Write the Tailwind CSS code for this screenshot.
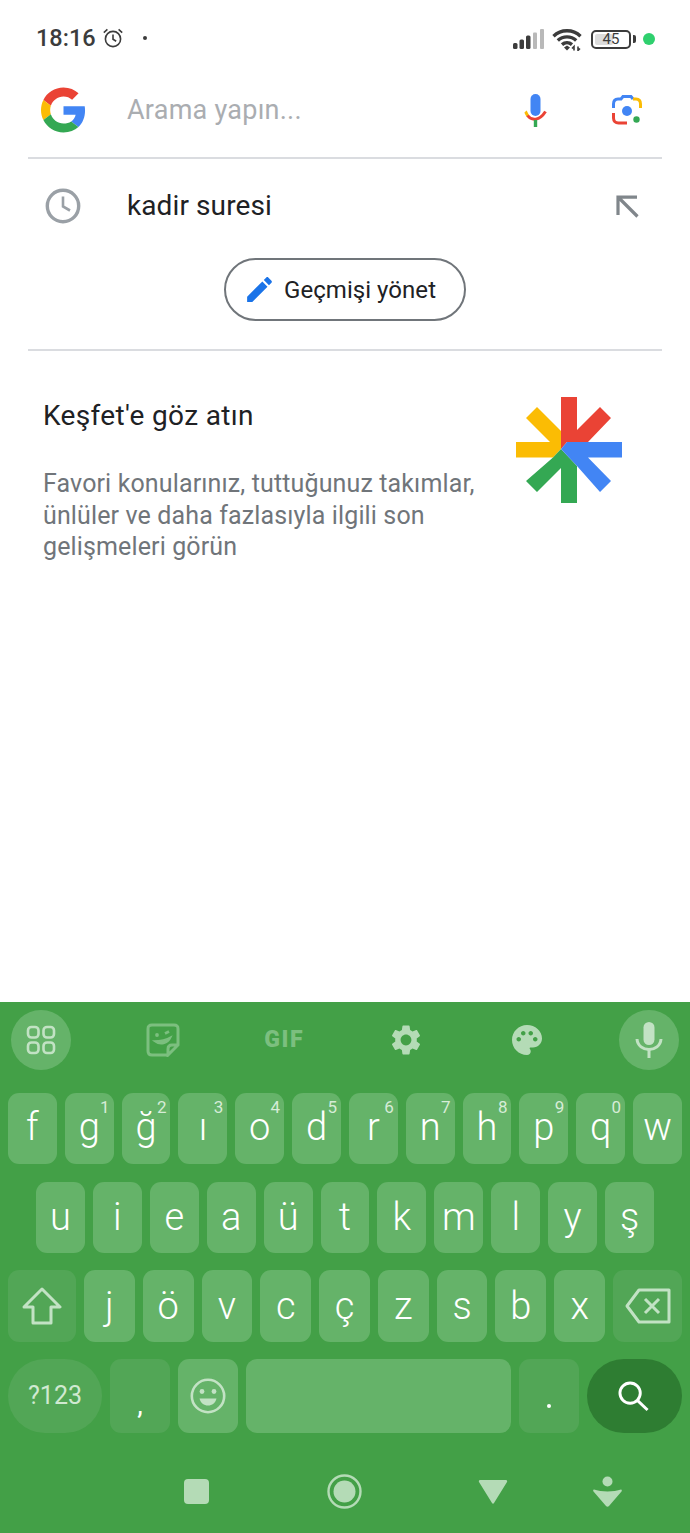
<!DOCTYPE html>
<html lang="tr">
<head>
  <meta charset="UTF-8" />
  <meta name="viewport" content="width=device-width, initial-scale=1.0"/>
  <title>Arama</title>
  <script src="https://cdn.jsdelivr.net/npm/@tailwindcss/browser@4"></script>
</head>
<body class="bg-white font-['Roboto',sans-serif] text-[#202124]">
<div class="w-[690px] h-[1533px] flex flex-col overflow-hidden">

  <!-- status bar -->
  <div class="h-[72px] pt-[6px] pl-[36px] pr-[35px] flex items-center text-[#3c3c3c]">
    <span class="text-[23.5px] font-medium leading-none">18:16</span>
    <svg class="w-[22px] h-[22px] ml-[6px] mb-[3px]" viewBox="0 0 22 22" fill="none" stroke="#3c3c3c" stroke-width="1.6"><circle cx="11" cy="12" r="7.6"/><path d="M11 7.5V12.3l3.2 2M1.8 5.600 5.400 2.400M20.200 5.600 16.600 2.400"/></svg>
    <span class="w-[4px] h-[4px] rounded-full bg-[#3c3c3c] ml-[19px] mb-[3px]"></span>
    <div class="ml-auto flex items-center">
      <svg class="w-[32px] h-[20px]" viewBox="0 0 32 20"><rect x="0" y="14" width="4.500" height="6" rx="1.500" fill="#3c3c3c"/><rect x="6.500" y="10.500" width="4.500" height="9.500" rx="1.500" fill="#3c3c3c"/><rect x="13" y="6.500" width="4.500" height="13.500" rx="1.500" fill="#3c3c3c"/><rect x="20" y="3.500" width="4" height="16.500" rx="1" fill="#b9b9b9"/><rect x="27" y="0" width="4" height="20" rx="1" fill="#b9b9b9"/></svg>
      <svg class="w-[31px] h-[23px] ml-[7px]" viewBox="0 0 31 23" fill="none" stroke="#3c3c3c" stroke-width="3.400"><path d="M1.500 8.200C9 1 21 1 28.500 8.200M5.800 12.500C11 7.600 19 7.600 24.200 12.500M10 16.600C13 14 17 14 20 16.600"/><path d="M12 19.500 15 17.500 18 19.500 15 22.500Z" fill="#3c3c3c" stroke="none"/><path d="M22 22.500v-4l-2 2M26 18.500v4l2-2" stroke-width="1.600"/></svg>
      <div class="relative ml-[8px] w-[40px] h-[19px] border-2 border-[#3c3c3c] rounded-[5px] flex items-center p-[2px]">
        <div class="h-full w-[55%] bg-[#dcdcdc] rounded-[2px]"></div>
        <span class="absolute inset-0 flex items-center justify-center text-[15px] leading-none">45</span>
      </div>
      <span class="w-[3px] h-[8px] ml-[2px] bg-[#3c3c3c] rounded-r-[2px]"></span>
      <span class="w-[12px] h-[12px] ml-[7px] rounded-full bg-[#2fd06e]"></span>
    </div>
  </div>

  <!-- search field -->
  <div class="h-[76px] flex items-center pl-[41px] pr-[48px]">
    <svg class="w-[45px] h-[46px] shrink-0" viewBox="0 0 48 48">
      <path fill="#EA4335" d="M24 9.5c3.54 0 6.71 1.22 9.21 3.6l6.85-6.85C35.9 2.38 30.47 0 24 0 14.62 0 6.51 5.38 2.56 13.22l7.98 6.19C12.43 13.72 17.74 9.5 24 9.5z"/>
      <path fill="#4285F4" d="M46.98 24.55c0-1.57-.15-3.09-.38-4.55H24v9.02h12.94c-.58 2.96-2.26 5.48-4.78 7.18l7.73 6c4.51-4.18 7.09-10.36 7.09-17.65z"/>
      <path fill="#FBBC05" d="M10.53 28.59c-.48-1.45-.76-2.99-.76-4.59s.27-3.14.76-4.59l-7.98-6.19C.92 16.46 0 20.12 0 24c0 3.88.92 7.54 2.56 10.78l7.97-6.19z"/>
      <path fill="#34A853" d="M24 48c6.48 0 11.93-2.13 15.89-5.81l-7.73-6c-2.15 1.45-4.92 2.3-8.16 2.3-6.26 0-11.57-4.22-13.47-9.91l-7.98 6.19C6.51 42.62 14.62 48 24 48z"/>
    </svg>
    <span class="ml-[41px] text-[27px] tracking-[0.25px] leading-none text-[#aaadb1]">Arama yapın...</span>
    <svg class="ml-auto w-[23px] h-[33px]" viewBox="0 0 23 33" fill="none">
      <rect x="6.500" y="0" width="10" height="22" rx="5" fill="#4285F4"/>
      <path d="M1.500 17.500C2 18 2.300 20 4 22" stroke="#FBBC05" stroke-width="3"/>
      <path d="M3.600 21.500C7.500 27 15.500 27 21.500 17.500" stroke="#EA4335" stroke-width="3"/>
      <rect x="9.800" y="26" width="3.400" height="7" fill="#34A853"/>
    </svg>
    <svg class="ml-[65px] w-[30px] h-[30px]" viewBox="0 0 30 30" fill="none">
      <path d="M1.500 13V9C1.500 5.500 3.500 4 6 4H9L11 1.500H19L21 4" stroke="#4285F4" stroke-width="3"/>
      <path d="M21 4H24C27 4 28.500 6 28.500 9V13" stroke="#FBBC05" stroke-width="3"/>
      <path d="M1.500 18V23C1.500 26 3.500 28 6.500 28H15" stroke="#EA4335" stroke-width="3"/>
      <circle cx="15" cy="16" r="5" fill="#4285F4"/>
      <circle cx="24.500" cy="24.500" r="3.200" fill="#34A853"/>
    </svg>
  </div>
  <div class="mt-[9px] mx-[28px] h-[2px] bg-[#dadce0]"></div>

  <!-- recent query -->
  <div class="h-[94px] flex items-center pl-[45px] pr-[51px]">
    <svg class="w-[36px] h-[36px] shrink-0" viewBox="0 0 36 36" fill="none" stroke="#9aa0a6"><circle cx="18" cy="18" r="15.700" stroke-width="3.400"/><path d="M18 8.500V18.500L25 22.500" stroke-width="2.600"/></svg>
    <span class="ml-[46px] text-[28px] tracking-[0.1px] leading-none">kadir suresi</span>
    <svg class="ml-auto w-[23px] h-[23px]" viewBox="0 0 23 23" fill="none" stroke="#80868b" stroke-width="3.200"><path d="M2 20V2.200H21M2.500 2.500 21.500 21.500"/></svg>
  </div>

  <div class="mt-[5px] flex justify-center">
    <div class="w-[242px] h-[63px] pl-[17px] border-2 border-[#70757a] rounded-full flex items-center">
      <svg class="w-[33px] h-[33px]" viewBox="0 0 24 24" fill="#1a73e8"><path d="M3 17.25V21h3.75L17.81 9.94l-3.75-3.75L3 17.25zM20.71 7.04c.39-.39.39-1.02 0-1.41l-2.34-2.34c-.39-.39-1.02-.39-1.41 0l-1.83 1.83 3.75 3.75 1.83-1.83z"/></svg>
      <span class="ml-[8px] text-[24px] tracking-[0.05px] leading-none">Geçmişi yönet</span>
    </div>
  </div>
  <div class="mt-[28px] mx-[28px] h-[2px] bg-[#dadce0]"></div>

  <!-- discover -->
  <div class="flex pl-[43px] pt-[47px] pr-[68px]">
    <div class="w-[450px]">
      <div class="text-[28px] tracking-[0.35px] leading-[36px]">Keşfet'e göz atın</div>
      <p class="mt-[34px] text-[25px] tracking-[0.13px] leading-[31.5px] text-[#70757a]">Favori konularınız, tuttuğunuz takımlar, ünlüler ve daha fazlasıyla ilgili son gelişmeleri görün</p>
    </div>
    <svg class="ml-auto -mt-[1px] w-[106px] h-[106px] shrink-0" viewBox="0 0 106 106">
      <polygon fill="#FBBC04" points="21,10 45,34 45,52 37,60.5 0,60.5 0,45 34,45 10,21"/>
      <polygon fill="#34A853" points="45,52 61,69 61,106 45,106 45,71 21,95 10,84 37,60.5"/>
      <polygon fill="#EA4335" points="45,0 61,0 61,33 84,10 95,21 72,45 51,45 45,52"/>
      <polygon fill="#4285F4" points="45,52 51,45 106,45 106,60.5 72,60.5 95,84 84,95 61,69"/>
    </svg>
  </div>

  <!-- keyboard -->
  <div class="mt-auto h-[531px] bg-[#43a047] flex flex-col text-white">
    <div class="mt-[8px] px-[11px] flex justify-between items-center">
      <div class="w-[60px] h-[60px] rounded-full bg-[#65b369] flex items-center justify-center">
        <svg class="w-[30px] h-[30px]" viewBox="0 0 30 30" fill="none" stroke="#c2e2c4" stroke-width="2.600"><rect x="2" y="2" width="10.500" height="10.500" rx="3.500"/><rect x="17.500" y="2" width="10.500" height="10.500" rx="3.500"/><rect x="2" y="17.500" width="10.500" height="10.500" rx="3.500"/><rect x="17.500" y="17.500" width="10.500" height="10.500" rx="3.500"/></svg>
      </div>
      <div class="w-[60px] h-[60px] flex items-center justify-center">
        <svg class="w-[34px] h-[34px]" viewBox="0 0 34 34" fill="none" stroke="#7cbf7f" stroke-width="3"><path d="M22 32H6C3 32 2 30 2 28V6C2 3 3 2 6 2H28C31 2 32 3 32 6V22L22 32V26C22 23 24 22 26 22H32"/><path d="M8 18C14 23 22 21 25 14C20 17 14 18 8 18Z" fill="#7cbf7f" stroke-width="1.500"/><circle cx="11" cy="12" r="1.900" fill="#7cbf7f" stroke="none"/><path d="M19 10.500 23 8.500" stroke-width="2.600"/></svg>
      </div>
      <div class="w-[60px] h-[60px] flex items-center justify-center text-[23px] font-black tracking-[1.500px] text-[#7cbf7f]">GIF</div>
      <div class="w-[60px] h-[60px] flex items-center justify-center">
        <svg class="w-[36px] h-[36px]" viewBox="0 0 24 24" fill="#b4dbb6"><path d="M19.14 12.94c.04-.3.06-.61.06-.94 0-.32-.02-.64-.07-.94l2.03-1.58c.18-.14.23-.41.12-.61l-1.92-3.32c-.12-.22-.37-.29-.59-.22l-2.39.96c-.5-.38-1.03-.7-1.62-.94l-.36-2.54c-.04-.24-.24-.41-.48-.41h-3.84c-.24 0-.43.17-.47.41l-.36 2.54c-.59.24-1.13.57-1.62.94l-2.39-.96c-.22-.08-.47 0-.59.22L2.74 8.87c-.12.21-.08.47.12.61l2.03 1.58c-.05.3-.09.63-.09.94s.02.64.07.94l-2.03 1.58c-.18.14-.23.41-.12.61l1.92 3.32c.12.22.37.29.59.22l2.39-.96c.5.38 1.03.7 1.62.94l.36 2.54c.05.24.24.41.48.41h3.84c.24 0 .44-.17.47-.41l.36-2.54c.59-.24 1.13-.56 1.62-.94l2.39.96c.22.08.47 0 .59-.22l1.92-3.32c.12-.22.07-.47-.12-.61l-2.01-1.58zM12 15.6c-1.98 0-3.6-1.62-3.6-3.6s1.62-3.6 3.6-3.6 3.6 1.62 3.6 3.6-1.62 3.6-3.6 3.6z"/></svg>
      </div>
      <div class="w-[60px] h-[60px] flex items-center justify-center">
        <svg class="w-[36px] h-[36px]" viewBox="0 0 24 24" fill="#b4dbb6"><path d="M12 2C6.49 2 2 6.49 2 12s4.49 10 10 10c1.38 0 2.5-1.12 2.5-2.5 0-.61-.23-1.2-.64-1.67-.08-.1-.13-.21-.13-.33 0-.28.22-.5.5-.5H16c3.31 0 6-2.69 6-6 0-4.96-4.49-9-10-9zm5.5 11c-.83 0-1.5-.67-1.5-1.5s.67-1.5 1.5-1.5 1.5.67 1.5 1.5-.67 1.5-1.5 1.5zm-3-4c-.83 0-1.5-.67-1.5-1.5S13.67 6 14.5 6s1.5.67 1.5 1.5S15.33 9 14.5 9zM5 11.5c0-.83.67-1.5 1.5-1.5s1.5.67 1.5 1.5S7.33 13 6.5 13 5 12.33 5 11.5zm6-4c0 .83-.67 1.5-1.5 1.5S8 8.33 8 7.5 8.67 6 9.5 6s1.5.67 1.5 1.5z"/></svg>
      </div>
      <div class="w-[60px] h-[60px] rounded-full bg-[#65b369] flex items-center justify-center">
        <svg class="w-[28px] h-[36px]" viewBox="0 0 28 36" fill="none"><rect x="8.500" y="0" width="11" height="23" rx="5.500" fill="#c2e2c4"/><path d="M2 17C3 31 25 31 26 17" stroke="#c2e2c4" stroke-width="3"/><path d="M14 27V36" stroke="#c2e2c4" stroke-width="3"/></svg>
      </div>
    </div>

    <div class="mt-[23px] px-[8px] flex gap-[8px] h-[71px] text-[38px] font-[350] leading-none">
      <div class="relative flex-1 pb-[4px] rounded-[11px] bg-[#65b369] flex items-center justify-center">f</div>
      <div class="relative flex-1 pb-[4px] rounded-[11px] bg-[#65b369] flex items-center justify-center">g<span class="absolute top-[6px] right-[4px] text-[17px] font-normal text-[#d6ecd7]">1</span></div>
      <div class="relative flex-1 pb-[4px] rounded-[11px] bg-[#65b369] flex items-center justify-center">ğ<span class="absolute top-[6px] right-[4px] text-[17px] font-normal text-[#d6ecd7]">2</span></div>
      <div class="relative flex-1 pb-[4px] rounded-[11px] bg-[#65b369] flex items-center justify-center">ı<span class="absolute top-[6px] right-[4px] text-[17px] font-normal text-[#d6ecd7]">3</span></div>
      <div class="relative flex-1 pb-[4px] rounded-[11px] bg-[#65b369] flex items-center justify-center">o<span class="absolute top-[6px] right-[4px] text-[17px] font-normal text-[#d6ecd7]">4</span></div>
      <div class="relative flex-1 pb-[4px] rounded-[11px] bg-[#65b369] flex items-center justify-center">d<span class="absolute top-[6px] right-[4px] text-[17px] font-normal text-[#d6ecd7]">5</span></div>
      <div class="relative flex-1 pb-[4px] rounded-[11px] bg-[#65b369] flex items-center justify-center">r<span class="absolute top-[6px] right-[4px] text-[17px] font-normal text-[#d6ecd7]">6</span></div>
      <div class="relative flex-1 pb-[4px] rounded-[11px] bg-[#65b369] flex items-center justify-center">n<span class="absolute top-[6px] right-[4px] text-[17px] font-normal text-[#d6ecd7]">7</span></div>
      <div class="relative flex-1 pb-[4px] rounded-[11px] bg-[#65b369] flex items-center justify-center">h<span class="absolute top-[6px] right-[4px] text-[17px] font-normal text-[#d6ecd7]">8</span></div>
      <div class="relative flex-1 pb-[4px] rounded-[11px] bg-[#65b369] flex items-center justify-center">p<span class="absolute top-[6px] right-[4px] text-[17px] font-normal text-[#d6ecd7]">9</span></div>
      <div class="relative flex-1 pb-[4px] rounded-[11px] bg-[#65b369] flex items-center justify-center">q<span class="absolute top-[6px] right-[4px] text-[17px] font-normal text-[#d6ecd7]">0</span></div>
      <div class="relative flex-1 pb-[4px] rounded-[11px] bg-[#65b369] flex items-center justify-center">w</div>
    </div>

    <div class="mt-[18px] px-[36px] flex gap-[8px] h-[71px] text-[38px] font-[350] leading-none">
      <div class="flex-1 pb-[2px] rounded-[11px] bg-[#65b369] flex items-center justify-center">u</div>
      <div class="flex-1 pb-[2px] rounded-[11px] bg-[#65b369] flex items-center justify-center">i</div>
      <div class="flex-1 pb-[2px] rounded-[11px] bg-[#65b369] flex items-center justify-center">e</div>
      <div class="flex-1 pb-[2px] rounded-[11px] bg-[#65b369] flex items-center justify-center">a</div>
      <div class="flex-1 pb-[2px] rounded-[11px] bg-[#65b369] flex items-center justify-center">ü</div>
      <div class="flex-1 pb-[2px] rounded-[11px] bg-[#65b369] flex items-center justify-center">t</div>
      <div class="flex-1 pb-[2px] rounded-[11px] bg-[#65b369] flex items-center justify-center">k</div>
      <div class="flex-1 pb-[2px] rounded-[11px] bg-[#65b369] flex items-center justify-center">m</div>
      <div class="flex-1 pb-[2px] rounded-[11px] bg-[#65b369] flex items-center justify-center">l</div>
      <div class="flex-1 pb-[2px] rounded-[11px] bg-[#65b369] flex items-center justify-center">y</div>
      <div class="flex-1 pb-[2px] rounded-[11px] bg-[#65b369] flex items-center justify-center">ş</div>
    </div>

    <div class="mt-[17px] px-[8px] flex gap-[8px] h-[72px] text-[38px] font-[350] leading-none">
      <div class="w-[68px] rounded-[11px] bg-[#52a656] flex items-center justify-center">
        <svg class="w-[40px] h-[38px]" viewBox="0 0 40 38" fill="none" stroke="#c2e2c4" stroke-width="3" stroke-linejoin="round"><path d="M20 2 38 20H29V36H11V20H2Z"/></svg>
      </div>
      <div class="flex-1 rounded-[11px] bg-[#65b369] flex items-center justify-center">j</div>
      <div class="flex-1 rounded-[11px] bg-[#65b369] flex items-center justify-center">ö</div>
      <div class="flex-1 rounded-[11px] bg-[#65b369] flex items-center justify-center">v</div>
      <div class="flex-1 rounded-[11px] bg-[#65b369] flex items-center justify-center">c</div>
      <div class="flex-1 rounded-[11px] bg-[#65b369] flex items-center justify-center">ç</div>
      <div class="flex-1 rounded-[11px] bg-[#65b369] flex items-center justify-center">z</div>
      <div class="flex-1 rounded-[11px] bg-[#65b369] flex items-center justify-center">s</div>
      <div class="flex-1 rounded-[11px] bg-[#65b369] flex items-center justify-center">b</div>
      <div class="flex-1 rounded-[11px] bg-[#65b369] flex items-center justify-center">x</div>
      <div class="w-[69px] rounded-[11px] bg-[#52a656] flex items-center justify-center">
        <svg class="w-[46px] h-[36px]" viewBox="0 0 46 36" fill="none" stroke="#c2e2c4" stroke-width="3" stroke-linejoin="round"><path d="M14 2H44V34H14L2 18Z"/><path d="M20 11 34 25M34 11 20 25"/></svg>
      </div>
    </div>

    <div class="mt-[17px] px-[8px] flex gap-[8px] h-[74px]">
      <div class="w-[94px] rounded-full bg-[#52a656] flex items-center justify-center text-[25px] text-[#d0e9d1]">?123</div>
      <div class="w-[60px] rounded-[11px] bg-[#52a656] flex items-end justify-center pb-[14px] text-[28px] leading-none">,</div>
      <div class="w-[60px] rounded-[11px] bg-[#65b369] flex items-center justify-center">
        <svg class="w-[36px] h-[36px]" viewBox="0 0 36 36" fill="none"><circle cx="18" cy="18" r="16.200" stroke="#c2e2c4" stroke-width="2.600"/><circle cx="12" cy="13.500" r="2.400" fill="#c2e2c4"/><circle cx="24" cy="13.500" r="2.400" fill="#c2e2c4"/><path d="M9.500 20.500H26.500C25.500 25 22 27.500 18 27.500S10.500 25 9.500 20.500Z" fill="#c2e2c4"/></svg>
      </div>
      <div class="flex-1 rounded-[11px] bg-[#65b369]"></div>
      <div class="w-[60px] rounded-[11px] bg-[#52a656] flex items-end justify-center pb-[25px]"><span class="w-[4px] h-[4px] rounded-full bg-white"></span></div>
      <div class="w-[95px] rounded-full bg-[#2e7d32] flex items-center justify-center">
        <svg class="w-[31px] h-[31px] -ml-[2px]" viewBox="0 0 32 32" fill="none" stroke="#ffffff" stroke-width="3"><circle cx="12.500" cy="12.500" r="10.500"/><path d="M20 20 30.500 30"/></svg>
      </div>
    </div>

    <!-- nav bar -->
    <div class="mt-[33px] pl-[122px] flex items-center h-[50px]">
      <div class="w-[148px] flex justify-center"><span class="w-[25px] h-[25px] rounded-[4px] bg-[#b4dbb6]"></span></div>
      <div class="w-[148px] flex justify-center">
        <svg class="w-[35px] h-[35px]" viewBox="0 0 35 35" fill="none"><circle cx="17.500" cy="17.500" r="16" stroke="#b4dbb6" stroke-width="2.400"/><circle cx="17.500" cy="17.500" r="11" fill="#b4dbb6"/></svg>
      </div>
      <div class="w-[150px] flex justify-center">
        <svg class="w-[30px] h-[25px]" viewBox="0 0 30 25"><path d="M2 1H28C29 1 29.500 2 29 3L16 24C15.500 25 14.500 25 14 24L1 3C.5 2 1 1 2 1Z" fill="#b4dbb6"/></svg>
      </div>
      <div class="w-[78px] flex justify-center">
        <svg class="w-[29px] h-[31px]" viewBox="0 0 29 31" fill="#b4dbb6"><circle cx="14.500" cy="5.500" r="5"/><path d="M1 13.500 C8 16 21 16 28 13.500 C29 13.500 29 15 28.500 15.500 L16 30 C15 31 14 31 13 30 L.5 15.500 C0 15 0 13.500 1 13.500Z"/></svg>
      </div>
    </div>
  </div>
</div>
</body>
</html>
